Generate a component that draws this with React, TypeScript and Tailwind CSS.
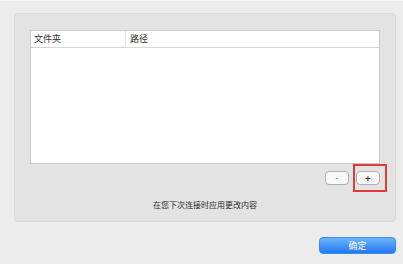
const font = { fontFamily: '"Noto Sans CJK SC", "Liberation Sans", sans-serif' }

export default function App() {
    return (
        <div className="w-[403px] h-[264px] bg-[#ececec] overflow-hidden relative" style={font}>
            <div className="h-px bg-[#f4f4f4]" />
            {/* Settings panel */}
            <div className="ml-[14px] mt-[12px] w-[382px] h-[209px] rounded-[4px] bg-[#e3e3e3] border border-[#dadada] px-[15px] pt-[16px] flex flex-col">
                {/* Table */}
                <div className="h-[134px] bg-white border border-[#c9c9c9] flex flex-col">
                    <div className="h-[17px] flex items-center border-b border-[#d6d6d6] text-[9px] text-[#333]">
                        <div className="w-[95px] pl-[3px] h-full flex items-center border-r border-[#e2e2e2]">文件夹</div>
                        <div className="pl-[4px]">路径</div>
                    </div>
                </div>

                {/* +/- buttons */}
                <div className="flex justify-end gap-[7px] mt-[7px] relative">
                    <button className="w-[24px] h-[14px] rounded-[4px] bg-[#f8f8f8] border border-[#b0b0b0] text-[8px] leading-none text-[#555] flex items-center justify-center">-</button>
                    <button className="w-[24px] h-[14px] rounded-[4px] bg-[#f8f8f8] border border-[#b0b0b0] text-[9px] leading-none text-[#333] flex items-center justify-center font-bold">+</button>
                    <div className="absolute right-[-7px] top-[-7px] w-[34px] h-[28px] border-2 border-[#e03a3a] pointer-events-none" />
                </div>

                <div className="mt-[14px] text-center text-[8px] text-[#2a2a2a]">在您下次连接时应用更改内容</div>
            </div>

            {/* Confirm */}
            <div className="flex justify-end pr-[7px] mt-[15px]">
                <button className="w-[77px] h-[17px] rounded-[4px] bg-gradient-to-b from-[#6cb6fb] to-[#1f78f3] border border-[#3d8bf0] text-white text-[9px] leading-none flex items-center justify-center">确定</button>
            </div>
        </div>
    )
}
